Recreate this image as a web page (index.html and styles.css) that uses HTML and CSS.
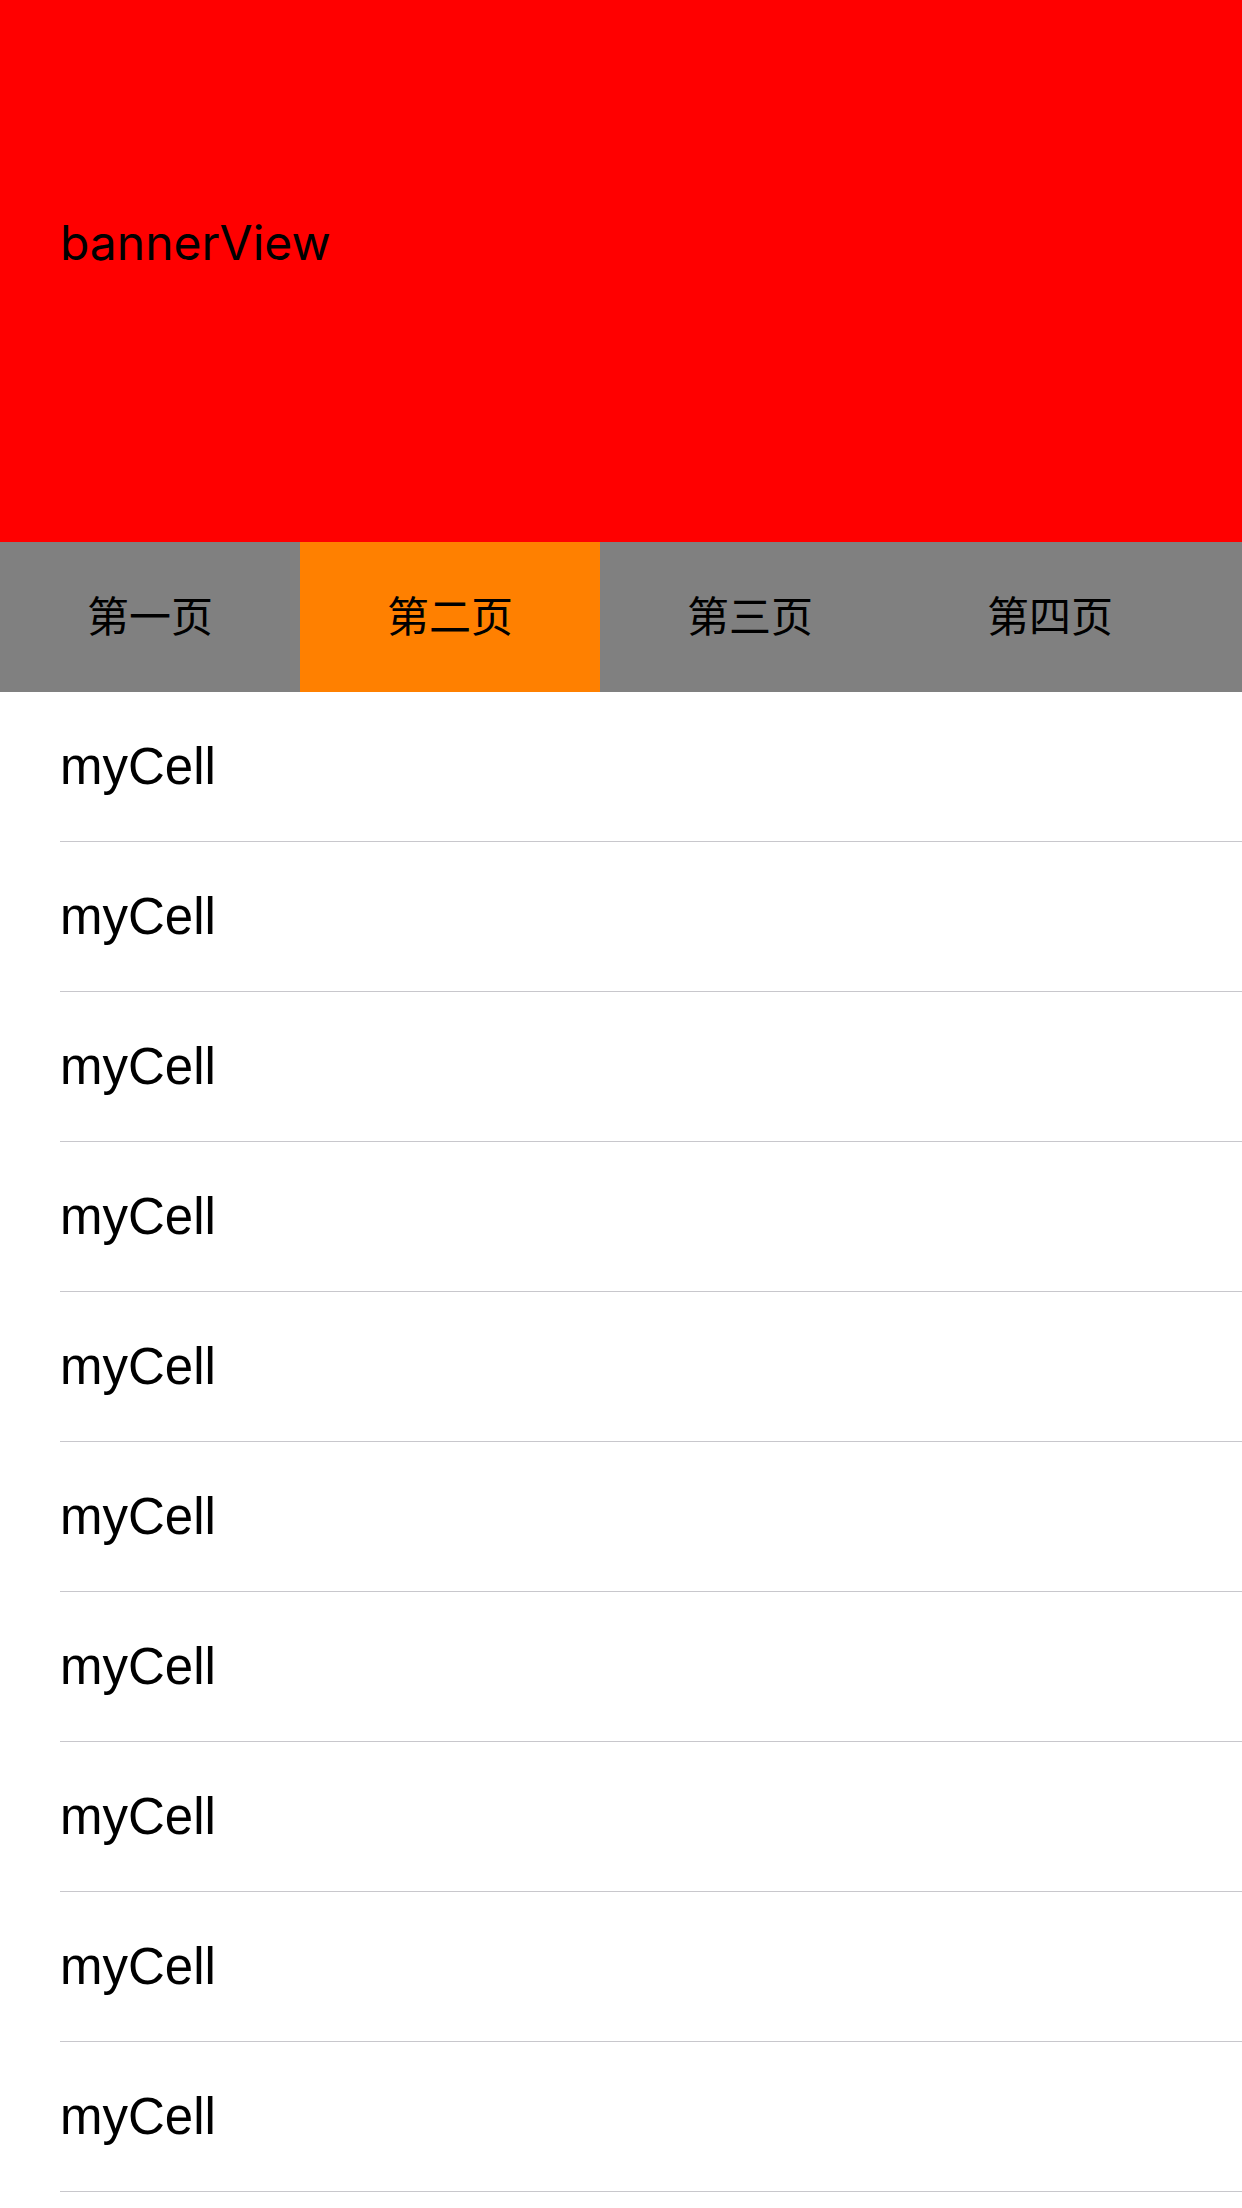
FILE: index.html
```html
<!DOCTYPE html>
<html>
<head>
<meta charset="utf-8">
<link rel="stylesheet" href="styles.css">
</head>
<body>
<div class="banner"><span class="banner-text">bannerView</span></div>
<div class="tabs">
  <div class="tab">第一页</div>
  <div class="tab active">第二页</div>
  <div class="tab">第三页</div>
  <div class="tab">第四页</div>
</div>
<div class="list">
  <div class="cell"><span class="cell-text">myCell</span></div>
  <div class="cell"><span class="cell-text">myCell</span></div>
  <div class="cell"><span class="cell-text">myCell</span></div>
  <div class="cell"><span class="cell-text">myCell</span></div>
  <div class="cell"><span class="cell-text">myCell</span></div>
  <div class="cell"><span class="cell-text">myCell</span></div>
  <div class="cell"><span class="cell-text">myCell</span></div>
  <div class="cell"><span class="cell-text">myCell</span></div>
  <div class="cell"><span class="cell-text">myCell</span></div>
  <div class="cell"><span class="cell-text">myCell</span></div>
</div>
</body>
</html>
```

FILE: styles.css
```css
html, body {
  margin: 0;
  padding: 0;
  background: #ffffff;
  width: 1242px;
  height: 2208px;
  overflow: hidden;
}
.banner {
  height: 542px;
  background: #ff0000;
  display: flex;
  align-items: center;
  padding-left: 60px;
  box-sizing: border-box;
  padding-bottom: 58px;
}
.banner-text {
  font-family: Inter, "Liberation Sans", sans-serif;
  font-size: 48px;
  color: #000;
}
.tabs {
  height: 150px;
  background: #808080;
  display: flex;
}
.tab {
  width: 300px;
  display: flex;
  align-items: center;
  justify-content: center;
  padding-bottom: 8px;
  box-sizing: border-box;
  font-family: "Noto Sans CJK SC", sans-serif;
  font-size: 42px;
  color: #000;
}
.tab.active {
  background: #ff8000;
}
.cell {
  height: 150px;
  margin-left: 60px;
  border-bottom: 1.5px solid #c8c7cc;
  box-sizing: border-box;
  display: flex;
  align-items: center;
}
.cell-text {
  font-family: "Liberation Sans", Arial, sans-serif;
  font-size: 51px;
  color: #000;
}
```
